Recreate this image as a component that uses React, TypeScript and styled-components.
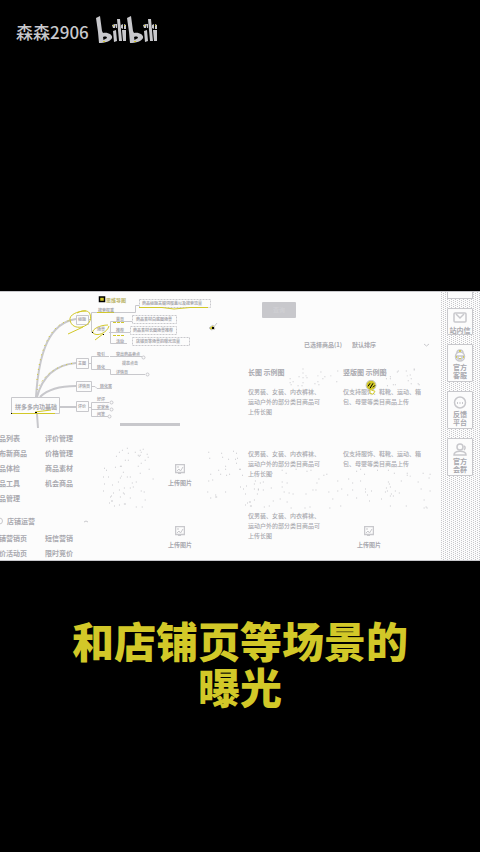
import React from "react";
import styled, { createGlobalStyle } from "styled-components";

const GRAY = "#c8c8cc";
const INK = "#a9a9af";
const YELLOW = "#d2c828";
const PAPER = "#fcfcfc";

const GlobalStyle = createGlobalStyle`
  * { box-sizing: border-box; }
  html { text-size-adjust: none; }
  body {
    margin: 0;
    background: #000;
    font-family: "Noto Sans CJK SC", "Noto Sans", sans-serif;
  }
`;

const Page = styled.main`
  min-height: 100vh;
  display: grid;
  grid-template-rows: 1fr auto 1fr;
  background: #000;
`;

const Brand = styled.header`
  display: flex;
  align-items: flex-start;
  gap: 7px;
  padding: 15px 16px;
`;

const UserName = styled.span`
  color: ${GRAY};
  font-size: 17px;
  font-weight: 500;
  line-height: 34px;
`;

const Board = styled.section`
  display: flex;
  width: 100%;
  aspect-ratio: 16 / 9;
  overflow: hidden;
  position: relative;
  background: ${PAPER};
  border-top: 1px solid ${GRAY};
  border-bottom: 1px solid ${GRAY};
`;

const LeftPane = styled.div`
  flex: 240 1 0;
  min-width: 0;
`;

const MapDrawing = styled.svg`
  display: block;
  width: 220px;
  height: 139px;
`;

const Lower = styled.div`
  display: flex;
  justify-content: space-between;
`;

const Menu = styled.nav`
  margin-left: -8px;
  width: 110px;
`;

const MenuGrid = styled.div`
  display: grid;
  grid-template-columns: 53px 1fr;
  grid-auto-rows: 15px;
`;

const MenuLink = styled.a`
  color: ${INK};
  font-size: 7px;
  font-weight: 700;
  line-height: 15px;
  white-space: nowrap;
  text-decoration: none;
`;

const MenuHeading = styled.h2`
  display: flex;
  align-items: center;
  gap: 4px;
  margin: 5px 0 0;
  padding-left: 4px;
  height: 20px;
  color: ${INK};
  font-size: 7px;
  font-weight: 700;
  line-height: 20px;

  svg:last-child { margin-left: auto; margin-right: 14px; }
`;

const UploadColumn = styled.div`
  display: flex;
  flex-direction: column;
  align-items: center;
  gap: 38px;
  width: 80px;
  margin-right: 20px;
  padding-top: 33px;
`;

const UploadButton = styled.button<{ $inCell?: boolean }>`
  display: flex;
  flex-direction: column;
  align-items: center;
  gap: 4px;
  border: 0;
  padding: 0;
  margin: ${(p) => (p.$inCell ? "15px 0 0 14px" : "0")};
  background: none;
  color: ${INK};
  font: 700 6px/10px "Noto Sans CJK SC", sans-serif;
  white-space: nowrap;
`;

const MainPane = styled.div`
  flex: 201 1 0;
  min-width: 0;
`;

const PrimaryButton = styled.button`
  display: block;
  width: 34px;
  height: 16px;
  margin: 10px 0 0 22px;
  padding: 0;
  border: 0;
  border-radius: 1px;
  background: ${GRAY};
  color: #d2d2d6;
  font: 6px/16px "Noto Sans CJK SC", sans-serif;
`;

const Filter = styled.div`
  display: flex;
  align-items: center;
  gap: 10px;
  height: 12px;
  margin: 21px 12px 0 64px;
  color: ${INK};
  font-size: 6px;
  font-weight: 700;
  line-height: 12px;
  white-space: nowrap;
`;

const SortBox = styled.div`
  flex: 1;
  display: flex;
  align-items: center;
`;

const Sort = styled.select`
  flex: 1;
  appearance: none;
  border: 0;
  padding: 0;
  background: none;
  color: ${INK};
  font: 700 6px/12px "Noto Sans CJK SC", sans-serif;
`;

const Table = styled.table`
  width: 193px;
  margin: 10px 0 0 8px;
  border-collapse: collapse;
  table-layout: fixed;

  th {
    height: 22px;
    padding: 0;
    color: ${INK};
    font-size: 7px;
    line-height: 10px;
    text-align: left;
  }
  td {
    height: 62px;
    padding: 4px 0 0;
    vertical-align: top;
    color: ${INK};
    font-size: 6px;
    font-weight: 500;
    line-height: 10px;
    white-space: pre-line;
  }
  th:first-child { width: 95px; }
`;

const Sidebar = styled.aside`
  flex: 0 0 39px;
  display: flex;
  flex-direction: column;
  gap: 9px;
  padding: 0 7px 0 6px;
  background-color: ${PAPER};
  background-image: conic-gradient(from 0deg at 1px 1px, transparent 75%, ${GRAY} 0),
    conic-gradient(from 0deg at 1px 1px, transparent 75%, ${GRAY} 0);
  background-size: 4px 2px, 4px 2px;
  background-position: 0 0, 2px 1px;
`;

const CardEdge = styled.div`
  height: 7px;
  background: ${PAPER};
  border: 1px solid ${GRAY};
  border-top: 0;
`;

const Card = styled.button<{ $compact: boolean }>`
  display: flex;
  flex-direction: column;
  align-items: center;
  gap: 1px;
  width: 100%;
  padding: ${(p) => (p.$compact ? "3px 0 0" : "4px 0 2px")};
  border: 1px solid ${GRAY};
  border-radius: 1px;
  background: ${PAPER};
  color: ${INK};
  font: 700 7px/8px "Noto Sans CJK SC", sans-serif;
  white-space: pre-line;
`;

const Speckles = styled.svg`
  position: absolute;
  inset: 0;
  width: 100%;
  height: 100%;
  pointer-events: none;
`;

const Caption = styled.p`
  width: 360px;
  max-width: 100%;
  margin: 56px auto 0;
  color: ${YELLOW};
  font-size: 42px;
  font-weight: 900;
  line-height: 46px;
  text-align: center;
`;

function BilibiliLogo() {
  return (
    <svg width="62" height="30" viewBox="0 0 62 30" role="img" aria-label="bilibili" fill={GRAY}>
      {[0, 31].map((x) => (
        <g key={x} transform={`translate(${x} 0)`}>
          <path
            fillRule="evenodd"
            d="M0 3L4 1L6 16L7 18C12 17 17 20 16 23C15 26 9 28 3 28L2 17ZM7 22L7.500 25L11 23C11 22 10 21 7 22Z"
          />
          <path d="M17 16L20 15L21 26L18 27ZM21 4L24 4L26 26L23 26ZM26 15L30 15L30 26L27 26Z" />
          <path d="M16 10L19 9L19 13L17 13ZM19 9L20 13L21 13L21 9ZM25 10L27 9L27 14L25 13ZM28 9L30 10L30 14L28 14Z" />
        </g>
      ))}
      <g fill={YELLOW}>
        <path d="M17 10h1v1h-1zM28 10h1v1h-1zM48 10h1v1h-1zM59 10h1v1h-1zM7 26h2v1h-2zM38 26h2v1h-2z" />
      </g>
    </svg>
  );
}

function MindMap() {
  return (
    <MapDrawing viewBox="0 292 220 139" role="img" aria-label="思维导图" fill="none" stroke={GRAY}>
      <path d="M36 397C39 350 50 323 76 319M37 397C42 378 54 365 76 363M40 397C47 390 58 386 76 386" strokeWidth="2" />
      <path d="M37 390C42 378 54 365 76 363M37 380C40 350 50 323 72 320" stroke={YELLOW} strokeDasharray="1 4" />
      <path d="M60 407H76M37 414L38 428" strokeWidth="2" />
      <path d="M11.500 397.500H59.500V413.500H11.500Z" />
      <path d="M76.500 315.500H88.500V324.500H76.500ZM76.500 358.500H88.500V368.500H76.500ZM76.500 381.500H91.500V391.500H76.500ZM76.500 401.500H88.500V411.500H76.500Z" />
      <path d="M88 319.500H91.500M91.500 332.500V312.500H135.500V305.500H139M109 332.500H130M110.500 321.500V343.500H127M110.500 321.500H132" />
      <path d="M139.500 299.500H210.500V307.500H139.500ZM132.500 315.500H176.500V323.500H132.500ZM130.500 326.500H176.500V334.500H130.500ZM132.500 337.500H189.500V345.500H132.500Z" strokeDasharray="2 1" />
      <path d="M88 363.500H91.500M109 356.500H91.500V369.500H110.500V374.500H145M110 356.500H142M92 386.500H95L97 388.500H112" />
      <path d="M88 407.500H91.500M109 402.500H91.500V416.500H108M91 409.500H109" />
      <circle cx="143.500" cy="357.500" r="1.500" />
      <circle cx="147.500" cy="374.500" r="1.500" />
      <circle cx="111.500" cy="402.500" r="1.500" />
      <circle cx="111.500" cy="409.500" r="1.500" />
      <circle cx="109.500" cy="416.500" r="1.500" />
      <path d="M120 424.500H180" strokeWidth="3" />
      <g stroke={YELLOW}>
        <path d="M11 413.500H55M97 312.500H114M139 307.500H162L174 309L190 307.500H208M35 412L51 410" />
        <path d="M86 311C77 311 69 315 70 320C71 326 76 328 82 327C89 325 92 320 90 314C89 311 84 309 77 313M83 327L68 334" />
        <path d="M108 325C99 325 91 330 93 333C97 337 107 333 109 326M103 334L95 340" />
        <path d="M113 322.500H124M113 335.500H124" strokeDasharray="3 1" />
      </g>
      <path d="M92 332h1v1h-1zM103 334h1v1h-1zM35 412h2v1h-2zM11 413h1v1h-1z" fill="#000" stroke="none" />
      <rect x="99.500" y="297" width="5" height="4.500" fill={YELLOW} stroke="#000" strokeWidth="1.500" />
      <path d="M217 323L213 328" strokeWidth="1" />
      <path d="M209 328L213 325L215 329L211 330Z" fill={YELLOW} />
      <path d="M212 327h2v2h-2z" fill="#000" stroke="none" />
      <g fill={INK} stroke="none" fontSize="4" fontWeight="700">
        <text x="15" y="409" fontSize="6">拼多多内功基础</text>
        <text x="106" y="302" fontSize="5" fill="#b8b264">思维导图</text>
        <text x="78" y="321">标题</text>
        <text x="78" y="365">主图</text>
        <text x="78" y="388">详情页</text>
        <text x="78" y="408">评价</text>
        <text x="98" y="312">搜索权重</text>
        <text x="97" y="331">场景</text>
        <text x="116" y="321">首页</text>
        <text x="116" y="332">推荐</text>
        <text x="116" y="343">活动</text>
        <text x="142" y="305">商品标题关键词覆盖以及搜索流量</text>
        <text x="136" y="321">商品素材白底图场景</text>
        <text x="133" y="332">商品素材长图场景推荐</text>
        <text x="136" y="343">店铺页等场景的曝光流量</text>
        <text x="97" y="356">吸引</text>
        <text x="116" y="356">突出商品卖点</text>
        <text x="122" y="365">提高点击</text>
        <text x="97" y="369">转化</text>
        <text x="116" y="374">详情页</text>
        <text x="100" y="388">转化率</text>
        <text x="97" y="401">好评</text>
        <text x="97" y="409">买家秀</text>
        <text x="97" y="416">问答</text>
      </g>
    </MapDrawing>
  );
}

const fields = [
  { x: 101, y: 157, w: 52, h: 60, n: 65 },
  { x: 207, y: 158, w: 34, h: 50, n: 28 },
  { x: 240, y: 178, w: 192, h: 40, n: 105 },
  { x: 290, y: 77, w: 50, h: 18, n: 24 },
  { x: 385, y: 77, w: 42, h: 18, n: 20 },
];

function buildSpeckles() {
  let seed = 17;
  const next = (limit: number) => {
    seed = (seed * 16807) % 2147483647;
    return seed % limit;
  };
  return fields
    .flatMap((f) => Array.from({ length: f.n }, () => `M${f.x + next(f.w)} ${f.y + next(f.h)}h1v1h-1z`))
    .join("");
}

const speckles = buildSpeckles();

function ImageIcon() {
  return (
    <svg width="10" height="10" viewBox="0 0 10 10" fill="none" stroke={GRAY}>
      <rect x=".5" y=".5" width="9" height="8" strokeWidth="1.500" />
      <path d="M2 3H4M2 7L4 5L5.500 7L8 3" />
      <path d="M3 9.500H6" />
    </svg>
  );
}

function Upload({ inCell }: { inCell?: boolean }) {
  return (
    <UploadButton type="button" $inCell={inCell}>
      <ImageIcon />
      上传图片
    </UploadButton>
  );
}

const cardIcons: Record<string, React.ReactNode> = {
  mail: (
    <>
      <rect x="1" y="1" width="12" height="9" rx="1" />
      <path d="M3 2L7 6L11 2" />
    </>
  ),
  service: (
    <>
      <circle cx="7" cy="7.500" r="4.500" />
      <path d="M4 4C4 0 10 0 10 4M2 7H12M5 7V10M9 7V10M5 10H9" />
      <path d="M6 2H8M3 8H4M10 8H11M7 9V10" stroke={YELLOW} />
    </>
  ),
  chat: (
    <>
      <circle cx="7" cy="6.500" r="5.500" />
      <path d="M4 7H5M6.500 7H7.500M9 7H10" strokeWidth="2" />
    </>
  ),
  group: (
    <>
      <circle cx="7" cy="4" r="3" />
      <path d="M1 12C1 7 13 7 13 12ZM11 3C13 4 12 6 11 7" />
    </>
  ),
};

const cards = [
  { icon: "mail", label: "站内信", compact: true },
  { icon: "service", label: "官方\n客服", compact: false },
  { icon: "chat", label: "反馈\n平台", compact: false },
  { icon: "group", label: "官方\n会群", compact: false },
];

const goods = ["商品列表", "评价管理", "发布新商品", "价格管理", "商品体检", "商品素材", "商品工具", "机会商品", "样品管理"];
const shop = ["店铺营销页", "短信营销", "竞价活动页", "限时竞价"];

const longText = "仅男装、女装、内衣裤袜、\n运动户外的部分类目商品可\n上传长图";
const tallText = "仅支持服饰、鞋靴、运动、箱\n包、母婴等类目商品上传";

export default function App() {
  return (
    <Page>
      <GlobalStyle />
      <Brand>
        <UserName>森森2906</UserName>
        <BilibiliLogo />
      </Brand>
      <Board>
        <LeftPane>
          <MindMap />
          <Lower>
            <Menu>
              <MenuGrid>
                {goods.map((t) => (
                  <MenuLink key={t} href="#">{t}</MenuLink>
                ))}
              </MenuGrid>
              <MenuHeading>
                <svg width="7" height="8" viewBox="0 0 7 8" fill="none" stroke={GRAY}>
                  <circle cx="3.500" cy="4" r="3" />
                </svg>
                店铺运营
                <svg width="4" height="3" viewBox="0 0 4 3" fill="none" stroke={GRAY}>
                  <path d="M0 2L2 1L4 2" />
                </svg>
              </MenuHeading>
              <MenuGrid>
                {shop.map((t) => (
                  <MenuLink key={t} href="#">{t}</MenuLink>
                ))}
              </MenuGrid>
            </Menu>
            <UploadColumn>
              <Upload />
              <Upload />
            </UploadColumn>
          </Lower>
        </LeftPane>
        <MainPane>
          <PrimaryButton type="button">查询</PrimaryButton>
          <Filter>
            <label htmlFor="sort">已选择商品(1)</label>
            <SortBox>
              <Sort id="sort">
                <option>默认排序</option>
              </Sort>
              <svg width="5" height="4" viewBox="0 0 5 4" fill="none" stroke={GRAY}>
                <path d="M0 1L2.500 3L5 1" />
              </svg>
            </SortBox>
          </Filter>
          <Table>
            <thead>
              <tr>
                <th>长图 示例图</th>
                <th>竖版图 示例图</th>
              </tr>
            </thead>
            <tbody>
              <tr>
                <td>{longText}</td>
                <td>{tallText}</td>
              </tr>
              <tr>
                <td>{longText}</td>
                <td>{tallText}</td>
              </tr>
              <tr>
                <td>{longText}</td>
                <td><Upload inCell /></td>
              </tr>
            </tbody>
          </Table>
        </MainPane>
        <Sidebar>
          <CardEdge />
          {cards.map((c) => (
            <Card key={c.label} type="button" $compact={c.compact}>
              <svg width="14" height="13" viewBox="0 0 14 13" fill="none" stroke={GRAY} strokeWidth="1.500">
                {cardIcons[c.icon]}
              </svg>
              {c.label}
            </Card>
          ))}
        </Sidebar>
        <Speckles viewBox="0 0 480 270" aria-hidden="true">
          <path d={speckles} fill={GRAY} />
          <circle cx="372" cy="94" r="5" fill={YELLOW} stroke={GRAY} />
          <path d="M369 95L371 92M371 97L374 92M374 96L376 94" fill="none" stroke="#000" strokeWidth="1" />
          <path d="M371 98V102L374 103L376 100L373 99Z" fill="#fff" stroke={YELLOW} />
        </Speckles>
      </Board>
      <Caption>和店铺页等场景的曝光</Caption>
    </Page>
  );
}
